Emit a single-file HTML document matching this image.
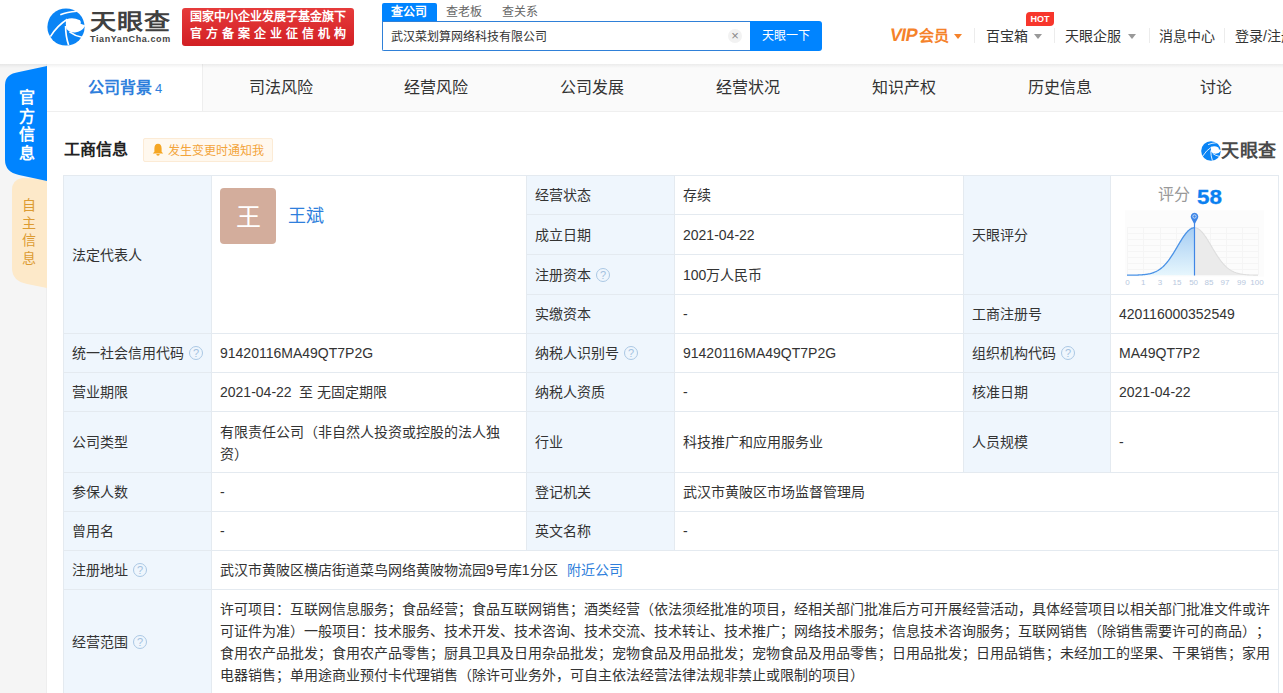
<!DOCTYPE html>
<html lang="zh-CN"><head><meta charset="utf-8">
<style>
*{box-sizing:border-box;margin:0;padding:0}
html,body{text-spacing-trim:space-all;width:1283px;height:693px;overflow:hidden;background:#fff;font-family:"Liberation Sans",sans-serif;color:#333}
.a{position:absolute;white-space:nowrap}
#side{position:absolute;left:0;top:64px;width:47px;height:629px;background:#f5f5f5;box-shadow:inset -1px 0 0 #eeeeee}
.tabbar{position:absolute;left:47px;top:64px;width:1236px;height:48px;background:#fafafa;border-bottom:1px solid #efefef}
.tab{position:absolute;top:64px;height:47px;width:156px;text-align:center;font-size:16px;line-height:47px;color:#333;white-space:nowrap}
.hl{position:absolute;height:1px;background:#e4eaf0}
.vl{position:absolute;width:1px;background:#e4eaf0}
.lb{position:absolute;background:#eff6fd}
.t{position:absolute;font-size:14px;line-height:20px;color:#333;white-space:nowrap}
.q{display:inline-block;width:14px;height:14px;border:1px solid #abc8e4;border-radius:50%;color:#a4c2e0;font-size:11px;line-height:12px;text-align:center;vertical-align:-3px;margin-left:5px;font-weight:normal;position:relative;top:1px}
.sep{position:absolute;top:28px;width:1px;height:15px;background:#ececec}
.nav{position:absolute;top:26px;font-size:14px;line-height:20px;color:#333;white-space:nowrap}
.tri{position:absolute;top:34px;width:0;height:0;border-left:4px solid transparent;border-right:4px solid transparent;border-top:5px solid #999}
.cell{position:absolute;border-right:1px solid #e4eaf0;border-bottom:1px solid #e4eaf0;display:flex;align-items:center;padding-left:8px;padding-bottom:2px;font-size:14px;color:#333;white-space:nowrap;overflow:hidden}
</style></head><body>
<!-- HEADER -->
<svg class="a" style="left:44px;top:4px" width="46" height="46" viewBox="0 0 46 46">
  <defs><g id="lg">
  <circle cx="22" cy="23" r="18.6" fill="#0a84f5"/>
  <path d="M22.2,15.6 Q28,12.4 36,16.2 Q37.4,18 36.6,19.8 L41,21.3 L40.8,22.6 Q38,27.6 31,28.4 Q25,28.6 22.3,24.5 Q21.3,20 22.2,15.6 Z" fill="#fff"/>
  <path d="M16.3,10.8 Q23,8 32.8,7.2" stroke="#fff" stroke-width="1.6" fill="none"/>
  <path d="M6.4,32.6 Q13,21.6 23.4,15.2" stroke="#fff" stroke-width="1.6" fill="none"/>
  <path d="M21.6,22 Q21.6,32.5 24.6,41" stroke="#fff" stroke-width="1.7" fill="none"/>
  <path d="M25.5,27.9 Q31,32 38,33.3" stroke="#fff" stroke-width="1.6" fill="none"/>
  </g></defs>
  <use href="#lg"/>
</svg>
<div class="a" style="left:90px;top:9px;font-size:26px;line-height:30px;font-weight:bold;color:#404040;letter-spacing:1px;transform:scaleY(0.82);transform-origin:0 0">天眼查</div>
<div class="a" style="left:90px;top:33px;font-size:9px;line-height:12px;font-weight:bold;color:#444;letter-spacing:0.6px">TianYanCha.com</div>
<div class="a" style="left:182px;top:8px;width:172px;height:38px;border-radius:3px;background:linear-gradient(180deg,#e63b3b,#d21f24)"></div>
<div class="a" style="left:190px;top:9px;font-size:12px;line-height:17px;color:#fff;font-weight:bold">国家中小企业发展子基金旗下</div>
<div class="a" style="left:190px;top:26px;font-size:12px;line-height:17px;color:#fff;letter-spacing:4px;font-weight:bold">官方备案企业征信机构</div>

<div class="a" style="left:382px;top:3px;width:55px;height:19px;background:#0084ff;border-radius:2px 2px 0 0"></div>
<div class="a" style="left:391px;top:3px;font-size:12px;line-height:18px;color:#fff;font-weight:bold">查公司</div>
<div class="a" style="left:446px;top:3px;font-size:12px;line-height:18px;color:#666">查老板</div>
<div class="a" style="left:502px;top:3px;font-size:12px;line-height:18px;color:#666">查关系</div>
<div class="a" style="left:382px;top:21px;width:370px;height:30px;border:1px solid #2f80d8;border-right:none;border-radius:0 0 0 2px;background:#fff"></div>
<div class="a" style="left:391px;top:28px;font-size:12px;line-height:18px;color:#333">武汉菜划算网络科技有限公司</div>
<div class="a" style="left:728px;top:29px;width:14px;height:14px;border-radius:50%;background:#f2f2f2;color:#888;font-size:13px;line-height:14px;text-align:center">×</div>
<div class="a" style="left:750px;top:21px;width:72px;height:30px;background:#0084ff;border-radius:0 3px 3px 0;color:#fff;font-size:12px;line-height:30px;text-align:center">天眼一下</div>

<div class="a" style="left:890px;top:25px;font-size:18px;line-height:20px;font-weight:bold;color:#f5822a;letter-spacing:-0.6px;transform:skewX(-10deg)">VIP</div>
<div class="a" style="left:919px;top:26px;font-size:15px;line-height:20px;font-weight:bold;color:#f5822a">会员</div>
<div class="tri" style="left:954px;border-top-color:#f5822a"></div>
<div class="sep" style="left:974px"></div>
<div class="nav" style="left:986px">百宝箱</div>
<div class="tri" style="left:1034px"></div>
<div class="a" style="left:1026px;top:12px;width:28px;height:14px;background:#f7362c;border-radius:4px 0 4px 0;color:#fff;font-size:9px;line-height:15px;font-weight:bold;text-align:center">HOT</div>
<div class="sep" style="left:1054px"></div>
<div class="nav" style="left:1065px">天眼企服</div>
<div class="tri" style="left:1128px"></div>
<div class="sep" style="left:1149px"></div>
<div class="nav" style="left:1159px">消息中心</div>
<div class="sep" style="left:1224px"></div>
<div class="nav" style="left:1235px">登录/注册</div>

<!-- SIDE -->
<div id="side"></div>
<svg class="a" style="left:0;top:60px" width="47" height="240" viewBox="0 60 47 240">
  <path d="M47,179 L47,288 L27,284 Q12,281 12,268 L12,190 Q12,180 22,178 Z" fill="#fde9c9"/>
  <path d="M47,66 L47,181 L19,175 Q5,172 5,160 L5,85 Q5,74 19,72 Z" fill="#0084ff"/>
</svg>
<div class="a" style="left:17.5px;top:89px;width:18px;font-size:16px;line-height:18.7px;font-weight:900;color:#fff;white-space:normal;text-align:center">官方信息</div>
<div class="a" style="left:21px;top:197px;width:16px;font-size:14px;line-height:17.5px;color:#dc9b32;white-space:normal;text-align:center">自主信息</div>

<!-- TABS -->
<div class="tabbar"></div>
<div class="a" style="left:47px;top:64px;width:156px;height:47px;background:#fff;border-right:1px solid #eee"></div>
<div class="tab" style="left:47px;color:#2f7fdc;font-weight:bold">公司背景<span style="font-size:13px;font-weight:normal;margin-left:3px">4</span></div>
<div class="tab" style="left:203px">司法风险</div>
<div class="tab" style="left:358px">经营风险</div>
<div class="tab" style="left:514px">公司发展</div>
<div class="tab" style="left:670px">经营状况</div>
<div class="tab" style="left:826px">知识产权</div>
<div class="tab" style="left:982px">历史信息</div>
<div class="tab" style="left:1138px">讨论</div>

<div class="a" style="left:0;top:64px;width:1283px;height:4px;background:linear-gradient(180deg,rgba(0,0,0,0.06),rgba(0,0,0,0))"></div>
<!-- SECTION TITLE -->
<div class="a" style="left:64px;top:139px;font-size:16px;line-height:22px;font-weight:bold;color:#222">工商信息</div>
<div class="a" style="left:143px;top:138px;width:130px;height:24px;background:#fff8ee;border:1px solid #fcebd5;border-radius:2px"></div>
<svg class="a" style="left:152px;top:143px" width="12" height="13" viewBox="0 0 12 13"><path d="M6,0.8 Q9.6,1 9.6,5.5 L9.6,8.8 L11.2,10.4 L0.8,10.4 L2.4,8.8 L2.4,5.5 Q2.4,1 6,0.8 Z" fill="#f5a623"/><path d="M4.3,11 A1.7,1.7 0 0 0 7.7,11 Z" fill="#f5a623"/></svg>
<div class="a" style="left:168px;top:142px;font-size:12px;line-height:18px;color:#f3a43a">发生变更时通知我</div>

<svg class="a" style="left:1201px;top:141px" width="20" height="20" viewBox="3 4 38 38"><use href="#lg"/></svg>
<div class="a" style="left:1221px;top:140px;font-size:18px;line-height:22px;font-weight:bold;color:#4a4a4a;letter-spacing:0.5px">天眼查</div>
<div class="a" style="left:63px;top:175px;width:1216px;height:545px;border-left:1px solid #e4eaf0;border-top:1px solid #e4eaf0"></div>
<div class="cell" style="left:64px;top:176px;width:148px;height:158px;background:#eff6fd;">法定代表人</div>
<div class="cell" style="left:212px;top:176px;width:315px;height:158px;"></div>
<div class="cell" style="left:527px;top:176px;width:148px;height:39px;background:#eff6fd;">经营状态</div>
<div class="cell" style="left:675px;top:176px;width:289px;height:39px;">存续</div>
<div class="cell" style="left:527px;top:215px;width:148px;height:40px;background:#eff6fd;">成立日期</div>
<div class="cell" style="left:675px;top:215px;width:289px;height:40px;padding-bottom:0;">2021-04-22</div>
<div class="cell" style="left:527px;top:255px;width:148px;height:40px;background:#eff6fd;">注册资本<span class="q">?</span></div>
<div class="cell" style="left:675px;top:255px;width:289px;height:40px;">100万人民币</div>
<div class="cell" style="left:527px;top:295px;width:148px;height:39px;background:#eff6fd;">实缴资本</div>
<div class="cell" style="left:675px;top:295px;width:289px;height:39px;padding-bottom:0;">-</div>
<div class="cell" style="left:964px;top:176px;width:147px;height:119px;background:#eff6fd;">天眼评分</div>
<div class="cell" style="left:1111px;top:176px;width:168px;height:119px;"></div>
<div class="cell" style="left:964px;top:295px;width:147px;height:39px;background:#eff6fd;">工商注册号</div>
<div class="cell" style="left:1111px;top:295px;width:168px;height:39px;padding-bottom:0;">420116000352549</div>
<div class="cell" style="left:64px;top:334px;width:148px;height:39px;background:#eff6fd;">统一社会信用代码<span class="q">?</span></div>
<div class="cell" style="left:212px;top:334px;width:315px;height:39px;padding-bottom:0;">91420116MA49QT7P2G</div>
<div class="cell" style="left:527px;top:334px;width:148px;height:39px;background:#eff6fd;">纳税人识别号<span class="q">?</span></div>
<div class="cell" style="left:675px;top:334px;width:289px;height:39px;padding-bottom:0;">91420116MA49QT7P2G</div>
<div class="cell" style="left:964px;top:334px;width:147px;height:39px;background:#eff6fd;">组织机构代码<span class="q">?</span></div>
<div class="cell" style="left:1111px;top:334px;width:168px;height:39px;padding-bottom:0;">MA49QT7P2</div>
<div class="cell" style="left:64px;top:373px;width:148px;height:39px;background:#eff6fd;">营业期限</div>
<div class="cell" style="left:212px;top:373px;width:315px;height:39px;">2021-04-22&nbsp;&nbsp;至&nbsp;无固定期限</div>
<div class="cell" style="left:527px;top:373px;width:148px;height:39px;background:#eff6fd;">纳税人资质</div>
<div class="cell" style="left:675px;top:373px;width:289px;height:39px;padding-bottom:0;">-</div>
<div class="cell" style="left:964px;top:373px;width:147px;height:39px;background:#eff6fd;">核准日期</div>
<div class="cell" style="left:1111px;top:373px;width:168px;height:39px;padding-bottom:0;">2021-04-22</div>
<div class="cell" style="left:64px;top:412px;width:148px;height:61px;background:#eff6fd;">公司类型</div>
<div class="cell" style="left:212px;top:412px;width:315px;height:61px;padding-bottom:0;padding-top:1px"><div style="line-height:22px;white-space:nowrap">有限责任公司（非自然人投资或控股的法人独<br>资）</div></div>
<div class="cell" style="left:527px;top:412px;width:148px;height:61px;background:#eff6fd;">行业</div>
<div class="cell" style="left:675px;top:412px;width:289px;height:61px;">科技推广和应用服务业</div>
<div class="cell" style="left:964px;top:412px;width:147px;height:61px;background:#eff6fd;">人员规模</div>
<div class="cell" style="left:1111px;top:412px;width:168px;height:61px;padding-bottom:0;">-</div>
<div class="cell" style="left:64px;top:473px;width:148px;height:39px;background:#eff6fd;">参保人数</div>
<div class="cell" style="left:212px;top:473px;width:315px;height:39px;padding-bottom:0;">-</div>
<div class="cell" style="left:527px;top:473px;width:148px;height:39px;background:#eff6fd;">登记机关</div>
<div class="cell" style="left:675px;top:473px;width:604px;height:39px;">武汉市黄陂区市场监督管理局</div>
<div class="cell" style="left:64px;top:512px;width:148px;height:39px;background:#eff6fd;">曾用名</div>
<div class="cell" style="left:212px;top:512px;width:315px;height:39px;padding-bottom:0;">-</div>
<div class="cell" style="left:527px;top:512px;width:148px;height:39px;background:#eff6fd;">英文名称</div>
<div class="cell" style="left:675px;top:512px;width:604px;height:39px;padding-bottom:0;">-</div>
<div class="cell" style="left:64px;top:551px;width:148px;height:39px;background:#eff6fd;">注册地址<span class="q">?</span></div>
<div class="cell" style="left:212px;top:551px;width:1067px;height:39px;">武汉市黄陂区横店街道菜鸟网络黄陂物流园9号库1分区<span style="color:#2f7fdc;margin-left:9px">附近公司</span></div>
<div class="cell" style="left:64px;top:590px;width:148px;height:104px;background:#eff6fd;">经营范围<span class="q">?</span></div>
<div class="cell" style="left:212px;top:590px;width:1067px;height:104px;align-items:flex-start"><div style="padding-top:8px;line-height:22px;white-space:nowrap">许可项目：互联网信息服务；食品经营；食品互联网销售；酒类经营（依法须经批准的项目，经相关部门批准后方可开展经营活动，具体经营项目以相关部门批准文件或许<br>可证件为准）一般项目：技术服务、技术开发、技术咨询、技术交流、技术转让、技术推广；网络技术服务；信息技术咨询服务；互联网销售（除销售需要许可的商品）；<br>食用农产品批发；食用农产品零售；厨具卫具及日用杂品批发；宠物食品及用品批发；宠物食品及用品零售；日用品批发；日用品销售；未经加工的坚果、干果销售；家用<br>电器销售；单用途商业预付卡代理销售（除许可业务外，可自主依法经营法律法规非禁止或限制的项目）</div></div>
<div class="a" style="left:220px;top:188px;width:56px;height:56px;border-radius:4px;background:#d3ad9c;color:#fff;font-size:25px;line-height:58px;text-align:center">王</div>
<div class="a" style="left:288px;top:204px;font-size:18px;line-height:24px;color:#2f7fdc">王斌</div>
<div class="a" style="left:1158px;top:185px;font-size:16px;line-height:20px;color:#999">评分</div>
<div class="a" style="left:1197px;top:185px;font-size:20px;line-height:24px;color:#0a80f0;font-weight:bold;transform:scaleX(1.12);transform-origin:0 0;-webkit-text-stroke:0.3px #0a80f0">58</div>
<svg class="a" style="left:1120px;top:206px" width="150" height="84" viewBox="0 0 150 84">
  <defs><linearGradient id="gb" x1="0" y1="0" x2="0" y2="1"><stop offset="0" stop-color="#a6cdf3"/><stop offset="1" stop-color="#e6f6fd"/></linearGradient></defs>
  <rect x="5" y="4.5" width="139" height="66" fill="#fcfcfc"/>
  <g stroke="#f5f5f5" stroke-width="1" fill="none">
    <path d="M7,21.5H138M7,27.5H138M7,33.5H138M7,39.5H138M7,45.5H138M7,51.5H138M7,57.5H138M7,63.5H138"/>
    <path d="M7.5,21V69M23.5,21V69M40.5,21V69M56.5,21V69M90.5,21V69M106.5,21V69M122.5,21V69M138.5,21V69"/>
  </g>
  <path d="M7.0,69.18 L7.5,69.18 L8.0,69.18 L8.5,69.17 L9.0,69.17 L9.5,69.17 L10.0,69.16 L10.5,69.16 L11.0,69.16 L11.5,69.15 L12.0,69.14 L12.5,69.14 L13.0,69.13 L13.5,69.12 L14.0,69.12 L14.5,69.11 L15.0,69.10 L15.5,69.08 L16.0,69.07 L16.5,69.06 L17.0,69.04 L17.5,69.03 L18.0,69.01 L18.5,68.99 L19.0,68.97 L19.5,68.95 L20.0,68.92 L20.5,68.89 L21.0,68.86 L21.5,68.83 L22.0,68.80 L22.5,68.76 L23.0,68.72 L23.5,68.67 L24.0,68.62 L24.5,68.57 L25.0,68.52 L25.5,68.45 L26.0,68.39 L26.5,68.32 L27.0,68.24 L27.5,68.16 L28.0,68.07 L28.5,67.98 L29.0,67.88 L29.5,67.77 L30.0,67.66 L30.5,67.53 L31.0,67.40 L31.5,67.26 L32.0,67.11 L32.5,66.95 L33.0,66.79 L33.5,66.61 L34.0,66.42 L34.5,66.22 L35.0,66.01 L35.5,65.78 L36.0,65.54 L36.5,65.29 L37.0,65.03 L37.5,64.75 L38.0,64.46 L38.5,64.15 L39.0,63.83 L39.5,63.49 L40.0,63.14 L40.5,62.77 L41.0,62.39 L41.5,61.98 L42.0,61.56 L42.5,61.12 L43.0,60.67 L43.5,60.19 L44.0,59.70 L44.5,59.19 L45.0,58.66 L45.5,58.11 L46.0,57.55 L46.5,56.96 L47.0,56.36 L47.5,55.74 L48.0,55.11 L48.5,54.45 L49.0,53.78 L49.5,53.09 L50.0,52.39 L50.5,51.67 L51.0,50.93 L51.5,50.18 L52.0,49.42 L52.5,48.64 L53.0,47.85 L53.5,47.05 L54.0,46.24 L54.5,45.42 L55.0,44.60 L55.5,43.76 L56.0,42.93 L56.5,42.08 L57.0,41.24 L57.5,40.39 L58.0,39.54 L58.5,38.70 L59.0,37.85 L59.5,37.02 L60.0,36.18 L60.5,35.36 L61.0,34.55 L61.5,33.74 L62.0,32.95 L62.5,32.17 L63.0,31.41 L63.5,30.67 L64.0,29.95 L64.5,29.25 L65.0,28.57 L65.5,27.91 L66.0,27.28 L66.5,26.68 L67.0,26.10 L67.5,25.56 L68.0,25.05 L68.5,24.57 L69.0,24.12 L69.5,23.71 L70.0,23.34 L70.5,23.00 L71.0,22.70 L71.5,22.43 L72.0,22.21 L72.5,22.03 L73.0,21.88 L73.5,21.78 L74.0,21.72 L74.5,21.70 L74.5,69.2 Z" fill="url(#gb)"/>
  <path d="M74.5,21.70 L75.0,21.72 L75.5,21.78 L76.0,21.88 L76.5,22.03 L77.0,22.21 L77.5,22.43 L78.0,22.70 L78.5,23.00 L79.0,23.34 L79.5,23.71 L80.0,24.12 L80.5,24.57 L81.0,25.05 L81.5,25.56 L82.0,26.10 L82.5,26.68 L83.0,27.28 L83.5,27.91 L84.0,28.57 L84.5,29.25 L85.0,29.95 L85.5,30.67 L86.0,31.41 L86.5,32.17 L87.0,32.95 L87.5,33.74 L88.0,34.55 L88.5,35.36 L89.0,36.18 L89.5,37.02 L90.0,37.85 L90.5,38.70 L91.0,39.54 L91.5,40.39 L92.0,41.24 L92.5,42.08 L93.0,42.93 L93.5,43.76 L94.0,44.60 L94.5,45.42 L95.0,46.24 L95.5,47.05 L96.0,47.85 L96.5,48.64 L97.0,49.42 L97.5,50.18 L98.0,50.93 L98.5,51.67 L99.0,52.39 L99.5,53.09 L100.0,53.78 L100.5,54.45 L101.0,55.11 L101.5,55.74 L102.0,56.36 L102.5,56.96 L103.0,57.55 L103.5,58.11 L104.0,58.66 L104.5,59.19 L105.0,59.70 L105.5,60.19 L106.0,60.67 L106.5,61.12 L107.0,61.56 L107.5,61.98 L108.0,62.39 L108.5,62.77 L109.0,63.14 L109.5,63.49 L110.0,63.83 L110.5,64.15 L111.0,64.46 L111.5,64.75 L112.0,65.03 L112.5,65.29 L113.0,65.54 L113.5,65.78 L114.0,66.01 L114.5,66.22 L115.0,66.42 L115.5,66.61 L116.0,66.79 L116.5,66.95 L117.0,67.11 L117.5,67.26 L118.0,67.40 L118.5,67.53 L119.0,67.66 L119.5,67.77 L120.0,67.88 L120.5,67.98 L121.0,68.07 L121.5,68.16 L122.0,68.24 L122.5,68.32 L123.0,68.39 L123.5,68.45 L124.0,68.52 L124.5,68.57 L125.0,68.62 L125.5,68.67 L126.0,68.72 L126.5,68.76 L127.0,68.80 L127.5,68.83 L128.0,68.86 L128.5,68.89 L129.0,68.92 L129.5,68.95 L130.0,68.97 L130.5,68.99 L131.0,69.01 L131.5,69.03 L132.0,69.04 L132.5,69.06 L133.0,69.07 L133.5,69.08 L134.0,69.10 L134.5,69.11 L135.0,69.12 L135.5,69.12 L136.0,69.13 L136.5,69.14 L137.0,69.14 L137.5,69.15 L138.0,69.16 L74.5,69.2 Z" fill="#ebebeb"/>
  <path d="M7.0,69.18 L7.5,69.18 L8.0,69.18 L8.5,69.17 L9.0,69.17 L9.5,69.17 L10.0,69.16 L10.5,69.16 L11.0,69.16 L11.5,69.15 L12.0,69.14 L12.5,69.14 L13.0,69.13 L13.5,69.12 L14.0,69.12 L14.5,69.11 L15.0,69.10 L15.5,69.08 L16.0,69.07 L16.5,69.06 L17.0,69.04 L17.5,69.03 L18.0,69.01 L18.5,68.99 L19.0,68.97 L19.5,68.95 L20.0,68.92 L20.5,68.89 L21.0,68.86 L21.5,68.83 L22.0,68.80 L22.5,68.76 L23.0,68.72 L23.5,68.67 L24.0,68.62 L24.5,68.57 L25.0,68.52 L25.5,68.45 L26.0,68.39 L26.5,68.32 L27.0,68.24 L27.5,68.16 L28.0,68.07 L28.5,67.98 L29.0,67.88 L29.5,67.77 L30.0,67.66 L30.5,67.53 L31.0,67.40 L31.5,67.26 L32.0,67.11 L32.5,66.95 L33.0,66.79 L33.5,66.61 L34.0,66.42 L34.5,66.22 L35.0,66.01 L35.5,65.78 L36.0,65.54 L36.5,65.29 L37.0,65.03 L37.5,64.75 L38.0,64.46 L38.5,64.15 L39.0,63.83 L39.5,63.49 L40.0,63.14 L40.5,62.77 L41.0,62.39 L41.5,61.98 L42.0,61.56 L42.5,61.12 L43.0,60.67 L43.5,60.19 L44.0,59.70 L44.5,59.19 L45.0,58.66 L45.5,58.11 L46.0,57.55 L46.5,56.96 L47.0,56.36 L47.5,55.74 L48.0,55.11 L48.5,54.45 L49.0,53.78 L49.5,53.09 L50.0,52.39 L50.5,51.67 L51.0,50.93 L51.5,50.18 L52.0,49.42 L52.5,48.64 L53.0,47.85 L53.5,47.05 L54.0,46.24 L54.5,45.42 L55.0,44.60 L55.5,43.76 L56.0,42.93 L56.5,42.08 L57.0,41.24 L57.5,40.39 L58.0,39.54 L58.5,38.70 L59.0,37.85 L59.5,37.02 L60.0,36.18 L60.5,35.36 L61.0,34.55 L61.5,33.74 L62.0,32.95 L62.5,32.17 L63.0,31.41 L63.5,30.67 L64.0,29.95 L64.5,29.25 L65.0,28.57 L65.5,27.91 L66.0,27.28 L66.5,26.68 L67.0,26.10 L67.5,25.56 L68.0,25.05 L68.5,24.57 L69.0,24.12 L69.5,23.71 L70.0,23.34 L70.5,23.00 L71.0,22.70 L71.5,22.43 L72.0,22.21 L72.5,22.03 L73.0,21.88 L73.5,21.78 L74.0,21.72 L74.5,21.70" stroke="#4a92e6" stroke-width="1.3" fill="none"/>
  <path d="M74.5,21.70 L75.0,21.72 L75.5,21.78 L76.0,21.88 L76.5,22.03 L77.0,22.21 L77.5,22.43 L78.0,22.70 L78.5,23.00 L79.0,23.34 L79.5,23.71 L80.0,24.12 L80.5,24.57 L81.0,25.05 L81.5,25.56 L82.0,26.10 L82.5,26.68 L83.0,27.28 L83.5,27.91 L84.0,28.57 L84.5,29.25 L85.0,29.95 L85.5,30.67 L86.0,31.41 L86.5,32.17 L87.0,32.95 L87.5,33.74 L88.0,34.55 L88.5,35.36 L89.0,36.18 L89.5,37.02 L90.0,37.85 L90.5,38.70 L91.0,39.54 L91.5,40.39 L92.0,41.24 L92.5,42.08 L93.0,42.93 L93.5,43.76 L94.0,44.60 L94.5,45.42 L95.0,46.24 L95.5,47.05 L96.0,47.85 L96.5,48.64 L97.0,49.42 L97.5,50.18 L98.0,50.93 L98.5,51.67 L99.0,52.39 L99.5,53.09 L100.0,53.78 L100.5,54.45 L101.0,55.11 L101.5,55.74 L102.0,56.36 L102.5,56.96 L103.0,57.55 L103.5,58.11 L104.0,58.66 L104.5,59.19 L105.0,59.70 L105.5,60.19 L106.0,60.67 L106.5,61.12 L107.0,61.56 L107.5,61.98 L108.0,62.39 L108.5,62.77 L109.0,63.14 L109.5,63.49 L110.0,63.83 L110.5,64.15 L111.0,64.46 L111.5,64.75 L112.0,65.03 L112.5,65.29 L113.0,65.54 L113.5,65.78 L114.0,66.01 L114.5,66.22 L115.0,66.42 L115.5,66.61 L116.0,66.79 L116.5,66.95 L117.0,67.11 L117.5,67.26 L118.0,67.40 L118.5,67.53 L119.0,67.66 L119.5,67.77 L120.0,67.88 L120.5,67.98 L121.0,68.07 L121.5,68.16 L122.0,68.24 L122.5,68.32 L123.0,68.39 L123.5,68.45 L124.0,68.52 L124.5,68.57 L125.0,68.62 L125.5,68.67 L126.0,68.72 L126.5,68.76 L127.0,68.80 L127.5,68.83 L128.0,68.86 L128.5,68.89 L129.0,68.92 L129.5,68.95 L130.0,68.97 L130.5,68.99 L131.0,69.01 L131.5,69.03 L132.0,69.04 L132.5,69.06 L133.0,69.07 L133.5,69.08 L134.0,69.10 L134.5,69.11 L135.0,69.12 L135.5,69.12 L136.0,69.13 L136.5,69.14 L137.0,69.14 L137.5,69.15 L138.0,69.16" stroke="#dedede" stroke-width="1.1" fill="none"/>
  <line x1="74.5" y1="14" x2="74.5" y2="69.5" stroke="#3f86e6" stroke-width="1.2"/>
  <path d="M74.5,18.5 L71.2,12.5 A3.8,3.8 0 1 1 77.8,12.5 Z" fill="#3f86e6"/>
  <circle cx="74.5" cy="10.5" r="1.7" fill="none" stroke="#cfe3fb" stroke-width="0.9"/>
  <g font-size="8" fill="#b8c8de" font-family="Liberation Sans" text-anchor="middle">
    <text x="7.4" y="79.3">0</text><text x="23.3" y="79.3">1</text><text x="39.9" y="79.3">3</text><text x="57" y="79.3">15</text><text x="73.6" y="79.3">50</text><text x="89" y="79.3">85</text><text x="105" y="79.3">97</text><text x="121.5" y="79.3">99</text><text x="137" y="79.3">100</text>
  </g>
</svg>

</body></html>
